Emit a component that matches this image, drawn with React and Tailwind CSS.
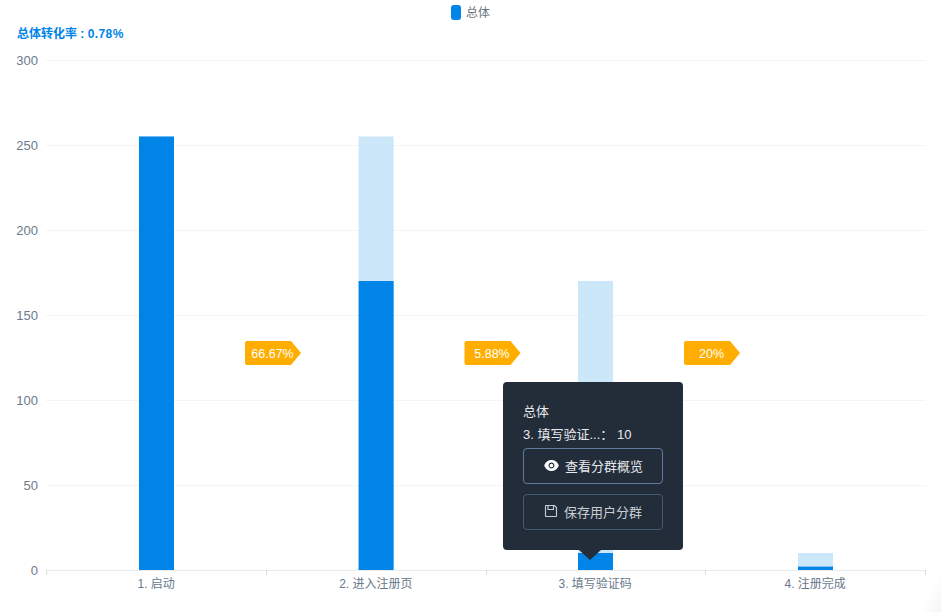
import React from 'react';
import { AiFillEye } from 'react-icons/ai';

const yTicks = [300, 250, 200, 150, 100, 50, 0];
const xTicks = [46.5, 266.5, 486.5, 705.5, 925.5];
const yOf = (v) => 570.5 - v * 1.7;

const bars = [
  { label: '1. 启动', x: 139, total: 255, value: 255 },
  { label: '2. 进入注册页', x: 358.6, total: 255, value: 170 },
  { label: '3. 填写验证码', x: 578, total: 170, value: 10 },
  { label: '4. 注册完成', x: 798, total: 10, value: 2 },
];

const rates = [
  { text: '66.67%', x: 245 },
  { text: '5.88%', x: 464.5 },
  { text: '20%', x: 684 },
];

const font = '"Liberation Sans", "Noto Sans CJK SC", sans-serif';

const SaveIcon = () => (
  <svg width="14" height="14" viewBox="0 0 14 14" fill="none" stroke="currentColor" strokeWidth="1.1" className="mb-[3px]">
    <path d="M2 1.5 H10.5 L12.5 3.5 V12 Q12.5 12.5 12 12.5 H2 Q1.5 12.5 1.5 12 V2 Q1.5 1.5 2 1.5 Z" />
    <path d="M4 1.5 V5.5 H9.5 V1.5" />
  </svg>
);

const FunnelChart = () => (
  <svg width="941" height="572" viewBox="0 40 941 572" className="block" style={{ fontFamily: font }}>
    {yTicks.map((t) => (
      <g key={t}>
        <line x1="46" x2="926" y1={yOf(t)} y2={yOf(t)} stroke={t === 0 ? '#e8eaec' : '#f3f4f6'} />
        <text x="38" y={yOf(t) + 4.5} textAnchor="end" fontSize="13" fill="#6b7a8c">{t}</text>
      </g>
    ))}
    {xTicks.map((x) => (
      <line key={x} x1={x} x2={x} y1="570" y2="575" stroke="#d9dcdf" />
    ))}
    {bars.map((b) => (
      <g key={b.label}>
        <rect x={b.x} y={570 - b.total * 1.7} width="35" height={b.total * 1.7} fill="#cce6fa" />
        <rect x={b.x} y={570 - b.value * 1.7} width="35" height={b.value * 1.7} fill="#0084e8" />
        <text x={b.x + 17.2} y="588" textAnchor="middle" fontSize="12" fill="#68788a">{b.label}</text>
      </g>
    ))}
    {rates.map((r) => (
      <g key={r.text}>
        <path
          d={`M${r.x + 2} 341 H${r.x + 46} L${r.x + 56} 353 L${r.x + 46} 365 H${r.x + 2} Q${r.x} 365 ${r.x} 363 V343 Q${r.x} 341 ${r.x + 2} 341 Z`}
          fill="#ffae00"
        />
        <text x={r.x + 27.5} y="358" textAnchor="middle" fontSize="12.5" fill="#ffffff">{r.text}</text>
      </g>
    ))}
  </svg>
);

const Tooltip = () => (
  <div className="absolute left-[503px] top-[382px] w-[180px] h-[168px] rounded bg-[#232d3a] px-5 pt-[21px] text-[13px] leading-[18px] text-[#e6e9ed]">
    <div>总体</div>
    <div className="mt-[5px]">3. 填写验证...： 10</div>
    <button className="mt-1 flex h-9 w-full items-center justify-center gap-[5px] rounded-sm border border-[#5f7c9e] pt-px text-[13px] text-[#e6e9ed]">
      <AiFillEye className="mb-[2px] h-[17px] w-[17px] text-white" />
      查看分群概览
    </button>
    <button className="mt-[10px] flex h-9 w-full items-center justify-center gap-[6px] rounded-sm border border-[#435a76] pt-px text-[13px] text-[#c9ced4]">
      <SaveIcon />
      保存用户分群
    </button>
    <div className="absolute left-[76px] top-full h-0 w-0 border-x-[11px] border-t-[10px] border-x-transparent border-t-[#232d3a]" />
  </div>
);

const App = () => (
  <div className="relative flex h-[612px] w-[941px] flex-col overflow-hidden bg-white" style={{ fontFamily: font }}>
    <div className="h-10 pt-[5px]">
      <div className="flex h-[15px] items-center justify-center gap-[5px] text-xs leading-4 text-[#6a7480]">
        <span className="h-[15px] w-[10px] rounded-[3px] bg-[#0084e8]" />
        总体
      </div>
      <div className="mt-[6px] pl-[17px] text-xs font-bold leading-4 text-[#0084e8]">
        总体转化率 : <span className="tracking-[0.4px]">0.78%</span>
      </div>
    </div>
    <FunnelChart />
    <Tooltip />
    <div className="absolute bottom-0 right-0 h-[45px] w-[22px] bg-linear-to-br from-transparent via-transparent to-[#f5f5f5]" />
  </div>
);

export default App;
